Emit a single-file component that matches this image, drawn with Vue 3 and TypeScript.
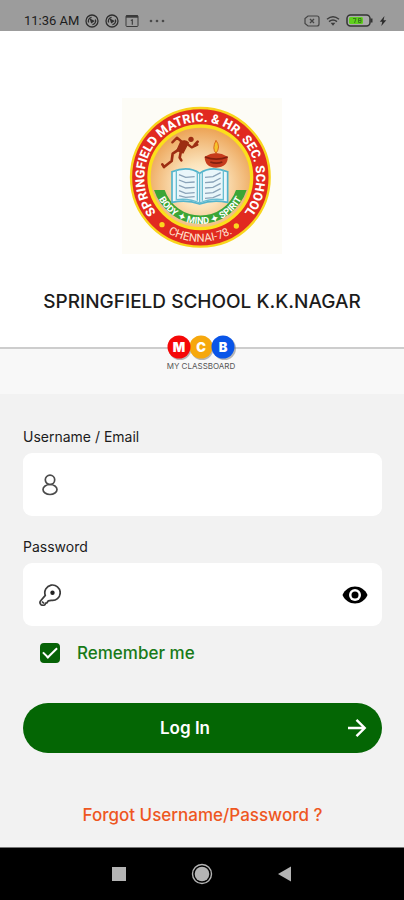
<script setup lang="ts">
import { ref } from 'vue'

const username = ref('')
const password = ref('')
const remember = ref(true)
const reveal = ref(false)
</script>

<template>
  <div class="screen">
    <div class="status">
      <span class="clock">11:36 AM</span>
      <svg v-for="n in 2" :key="n" class="status-icon" viewBox="0 0 14 14" width="14" height="14" fill="none" stroke="#2e2e2e">
        <circle cx="7" cy="7" r="6" stroke-width="1.3" />
        <path d="M3.6 8.6a3.8 3.8 0 0 1 3-5.2M10.4 5.4a3.8 3.8 0 0 1-3 5.2" stroke-width="1.3" />
        <path d="M4.5 4.2 9.8 7 6.2 9.6Z" fill="#2e2e2e" stroke="none" />
      </svg>
      <svg class="status-icon" viewBox="0 0 14 14" width="14" height="14" fill="none" stroke="#3a3a3a">
        <rect x="1" y="1.5" width="12" height="11" rx="1" />
        <path d="M1 2.5h12" stroke-width="2.4" />
        <path d="M5.8 6.6 7.3 5.8v5" stroke-width="1.1" />
      </svg>
      <svg class="more" viewBox="0 0 16 4" width="16" height="4" fill="#4a4a4a">
        <circle cx="2" cy="2" r="1.3" /><circle cx="8" cy="2" r="1.3" /><circle cx="14" cy="2" r="1.3" />
      </svg>
      <span class="grow"></span>
      <svg viewBox="0 0 16 12" width="16" height="12" fill="none" stroke="#444">
        <path d="M4 1h9a2 2 0 0 1 2 2v6a2 2 0 0 1-2 2H4L1 8.500V3.500Z" stroke-width="1.200" />
        <path d="m6 4 4 4m0-4L6 8" stroke-width="1.300" />
      </svg>
      <svg viewBox="0 0 14 12" width="14" height="12" fill="none" stroke="#3c3c3c" stroke-width="1.400">
        <path d="M1 4.200q6-5 12 0M3 6.600q4-3.300 8 0" />
        <path d="M4.600 7.800h4.800L7 10.800Z" fill="#3c3c3c" stroke="none" />
      </svg>
      <svg viewBox="0 0 27 13" width="27" height="13">
        <rect x="1" y="1" width="23" height="11" rx="3.500" fill="#aaa" stroke="#333" stroke-width="1.500" />
        <rect x="3" y="3" width="14" height="7" rx="1.500" fill="#5fd01c" />
        <path d="M7 4.500h3L8.500 9M12.500 4.500h2.500v4h-2.500ZM12.500 6.500H15" fill="none" stroke="#3b7a1c" />
        <path d="M25.500 4.500v4" stroke="#333" stroke-width="2" />
      </svg>
      <svg viewBox="0 0 8 12" width="8" height="12" fill="#2b2b2b"><path d="M5.500 1 .8 6.700h2.500L2.300 11 7.300 5.200H4.500Z" /></svg>
    </div>

    <header class="school">
      <svg class="crest" viewBox="10 10 480 468" width="160" height="156" role="img" aria-label="School crest">
        <defs>
          <radialGradient id="sky" cx="50%" cy="58%" r="55%">
            <stop offset="0" stop-color="#fffaf0" />
            <stop offset="0.400" stop-color="#fbe3bb" />
            <stop offset="1" stop-color="#eda65a" />
          </radialGradient>
          <path id="arc-top" d="M126 368A168 168 0 1 1 364 368" />
          <path id="arc-motto" d="M105 248A140 140 0 0 0 385 248" />
          <path id="arc-city" d="M86 358A193 193 0 0 0 404 358" />
        </defs>
        <rect x="10" y="10" width="480" height="468" fill="#fdfcf6" />
        <circle cx="245" cy="248" r="208" fill="#e12a20" stroke="#f8d51c" stroke-width="7" />
        <circle cx="245" cy="248" r="154" fill="url(#sky)" stroke="#fbe01c" stroke-width="10" />
        <path d="M106 286h32A113 113 0 0 0 352 286h32A146 146 0 0 1 106 286Z" fill="#3ba536" />
        <g class="crest-title"><text><textPath href="#arc-top" startOffset="50%" text-anchor="middle">SPRINGFIELD MATRIC. &amp; HR. SEC. SCHOOL</textPath></text></g>
        <g class="crest-motto"><text><textPath href="#arc-motto" startOffset="50%" text-anchor="middle">BODY ✦ MIND ✦ SPIRIT</textPath></text></g>
        <g class="crest-city"><text><textPath href="#arc-city" startOffset="50%" text-anchor="middle">CHENNAI-78.</textPath></text></g>
        <circle cx="130" cy="390" r="8" fill="#fbd81f" />
        <circle cx="353" cy="394" r="8" fill="#fbd81f" />
        <g fill="#9d2d12" stroke="#9d2d12" stroke-linecap="round" stroke-linejoin="round">
          <circle cx="217" cy="134" r="8" stroke="none" />
          <path d="M186 142q14-8 23 2l-16 31-18-8Z" stroke-width="4" />
          <path d="m190 142-15-13-14 14M206 148l13 10 17-8" fill="none" stroke-width="7" />
          <path d="m180 165-18 12-3 22-23 18M187 169l-4 20 5 8M136 217l-5-8M228 151l9-10" fill="none" stroke-width="8" />
        </g>
        <path d="M258 186q34-22 69 0 2 30-35 33-34-2-34-33Z" fill="#c63b1d" />
        <path d="M259 187q34 13 68 0M275 202q18 7 36 0" fill="none" stroke="#82200f" stroke-width="5" />
        <path d="M292 176q-13-14 0-39 15 20 0 39Z" fill="#f7c32a" stroke="#d96a1d" stroke-width="3" />
        <path d="M160 231q50-19 83 5 33-24 84-5v92q-46-9-84 5-38-14-83-5Z" fill="#e9f6fa" stroke="#52b4cc" stroke-width="5" />
        <path d="M173 225v90q38-5 70 10 32-15 71-10v-90M243 236v89M236 232v86M251 232v86" fill="none" stroke="#69bdd0" stroke-width="4" />
        <path d="m181 240 20 8 27-2M181 256l20 8 27-2M181 272l20 8 27-2M181 288l20 8 27-2M181 303l20 5 27-2M259 248l24-2 23-12M259 264l24-2 23-12M259 280l24-2 23-12M259 296l24-2 23-12M259 311l24-2 23-10" fill="none" stroke="#8aa3b8" stroke-width="4" />
      </svg>
      <h1>SPRINGFIELD SCHOOL K.K.NAGAR</h1>
    </header>

    <div class="brand">
      <svg class="brand-mark" viewBox="0 0 74 42" width="74" height="42" role="img" aria-label="My Classboard">
        <g fill="#777" opacity="0.500">
          <circle cx="16" cy="14.500" r="11.500" /><circle cx="38" cy="14.500" r="11.500" /><circle cx="60.500" cy="14.500" r="11.500" />
        </g>
        <circle cx="37" cy="13" r="11.500" fill="#f6a80d" />
        <circle cx="15" cy="13" r="11.500" fill="#f50808" />
        <circle cx="59" cy="13" r="11.500" fill="#0a55e8" />
        <g class="brand-letters">
          <text x="15" y="17.500">M</text><text x="37" y="17.500">C</text><text x="59" y="17.500">B</text>
        </g>
        <text class="brand-name" x="37" y="35">MY CLASSBOARD</text>
      </svg>
    </div>

    <form class="login" @submit.prevent>
      <label class="caption" for="username">Username / Email</label>
      <div class="field">
        <svg viewBox="0 0 22 24" width="22" height="24" fill="none" stroke="#4b4b4b" stroke-width="1.700">
          <circle cx="11" cy="6.800" r="4.700" />
          <ellipse cx="11" cy="16.500" rx="7" ry="5" />
        </svg>
        <input id="username" v-model="username" type="text" autocomplete="username" />
      </div>

      <label class="caption" for="password">Password</label>
      <div class="field">
        <svg viewBox="1 1 22 22" width="22" height="22" fill="none" stroke="#3c3c3c" stroke-width="1.700" stroke-linejoin="round">
          <path d="M7.300 12.400A7.700 7.700 0 1 1 13.200 17.300L10.300 17.800 9 19.800 7.600 20.100 7 21.600Q5 23 3 21.700 1.200 20 2.500 18Z" />
          <path d="m4 18.500 2 2" />
          <circle cx="14.500" cy="9.800" r="2.200" fill="#222" stroke="none" />
        </svg>
        <input id="password" v-model="password" :type="reveal ? 'text' : 'password'" autocomplete="current-password" />
        <button class="reveal" type="button" aria-label="Show password" @click="reveal = !reveal">
          <svg viewBox="0 0 26 18" width="26" height="18">
            <path d="M.5 9C3 3.500 7.500.5 13 .5S23 3.500 25.500 9C23 14.500 18.500 17.500 13 17.500S3 14.500.5 9Z" fill="#000" />
            <circle cx="13" cy="9" r="6" fill="#fff" />
            <circle cx="13" cy="9" r="3.500" fill="#000" />
          </svg>
        </button>
      </div>

      <label class="remember"><input v-model="remember" type="checkbox" /><span>Remember me</span></label>

      <button class="submit" type="submit">
        <span>Log In</span>
        <svg viewBox="0 0 20 20" width="20" height="20" fill="none" stroke="#fff" stroke-width="2.400"><path d="M1 10h16.500M9.500 1.800l8.200 8.200-8.200 8.200" /></svg>
      </button>

      <a class="forgot" href="#">Forgot Username/Password ?</a>
    </form>

    <nav class="system">
      <button type="button" aria-label="Recent apps"><svg viewBox="0 0 22 22" width="22" height="22"><path d="M4 4h14v14H4Z" fill="#b4b4b4" /></svg></button>
      <button type="button" aria-label="Home"><svg viewBox="0 0 22 22" width="22" height="22"><circle cx="11" cy="11" r="9.500" fill="none" stroke="#b4b4b4" stroke-width="1.400" /><circle cx="11" cy="11" r="7.300" fill="#b4b4b4" /></svg></button>
      <button type="button" aria-label="Back"><svg viewBox="0 0 22 22" width="22" height="22"><path d="M17 3.500v15L4 11Z" fill="#b4b4b4" /></svg></button>
    </nav>
  </div>
</template>

<style>
body {
  background: #f2f2f2;
}
</style>

<style scoped>
.screen {
  box-sizing: border-box;
  min-height: 100vh;
  display: flex;
  flex-direction: column;
  background: #f2f2f2;
  color: #1c1c1c;
  font-family: Inter, "Liberation Sans", sans-serif;
}
.screen svg {
  display: block;
  flex: none;
}
.status {
  box-sizing: border-box;
  height: 31px;
  padding: 10px 17px 0 24px;
  display: flex;
  align-items: center;
  gap: 6px;
  background: #9c9c9c;
}
.clock {
  font: 400 13px/20px Roboto, sans-serif;
  color: #1c1c1c;
}
.more {
  margin-left: 4px;
}
.grow {
  flex: 1;
}
.school {
  display: flex;
  flex-direction: column;
  align-items: center;
  gap: 36px;
  padding: 67px 16px 33px;
  background: #fff;
}
h1 {
  margin: 0;
  font-size: 19px;
  line-height: 24px;
  font-weight: 500;
  text-align: center;
}
.crest-title,
.crest-motto,
.crest-city {
  fill: #fff;
  font-family: Roboto, "Liberation Sans", sans-serif;
}
.crest-title {
  font-size: 38px;
  font-weight: 800;
}
.crest-motto {
  font-size: 28px;
  font-weight: 700;
}
.crest-city {
  font-size: 34px;
  fill: #ffe3cf;
}
.brand {
  position: relative;
  height: 45px;
  border-top: 2px solid #cdcdcd;
  background: #f8f8f8;
}
.brand-mark {
  position: absolute;
  top: -15px;
  left: 50%;
  margin-left: -38px;
}
.brand-letters {
  fill: #fff;
  font-size: 13px;
  font-weight: 900;
  text-anchor: middle;
}
.brand-name {
  fill: #555;
  font-size: 8px;
  text-anchor: middle;
}
.login {
  flex: 1;
  display: flex;
  flex-direction: column;
  padding: 34px 22px 20px 23px;
}
.caption {
  font-size: 14px;
  line-height: 18px;
}
.field {
  box-sizing: border-box;
  height: 63px;
  margin: 7px 0 22px;
  padding: 0 14px 0 16px;
  display: flex;
  align-items: center;
  gap: 14px;
  border-radius: 9px;
  background: #fff;
}
.field input {
  flex: 1;
  min-width: 0;
  height: 40px;
  padding: 0;
  border: 0;
  outline: 0;
  background: transparent;
  font: inherit;
  font-size: 16px;
}
button {
  border: 0;
  padding: 0;
  background: none;
  font: inherit;
  cursor: pointer;
}
.remember {
  align-self: flex-start;
  display: flex;
  align-items: center;
  gap: 17px;
  margin-top: -6px;
  margin-left: 17px;
  color: #187a18;
  font-size: 17px;
  line-height: 22px;
  font-weight: 500;
}
.remember input {
  appearance: none;
  display: grid;
  place-items: center;
  width: 20px;
  height: 20px;
  margin: 0;
  border: 2px solid #066206;
  border-radius: 4px;
}
.remember input:checked {
  background: #066206;
}
.remember input:checked::before {
  content: "";
  width: 14px;
  height: 8px;
  border: solid #fff;
  border-width: 0 0 2px 2px;
  box-sizing: border-box;
  transform: translateY(-2px) rotate(-45deg);
}
.submit {
  height: 50px;
  margin-top: 39px;
  padding: 0 15px 0 0;
  display: flex;
  align-items: center;
  border-radius: 25px;
  background: #046604;
  color: #fff;
  font-size: 17px;
  font-weight: 600;
}
.submit span {
  flex: 1;
}
.forgot {
  align-self: center;
  margin-top: 51px;
  color: #ee571f;
  font-size: 17px;
  line-height: 22px;
  font-weight: 500;
  text-decoration: none;
}
.system {
  box-sizing: border-box;
  height: 53px;
  padding: 0 77px;
  display: flex;
  align-items: center;
  justify-content: center;
  gap: 61px;
  border-top: 1px solid #777;
  background: #000;
}
</style>
